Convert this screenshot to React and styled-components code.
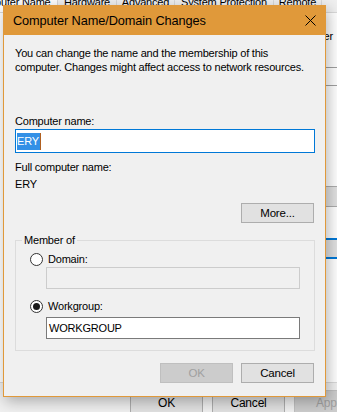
import React from "react";
import styled, { createGlobalStyle } from "styled-components";

const GlobalStyle = createGlobalStyle`
  html, body {
    margin: 0;
    padding: 0;
    background: #f0f0f0;
  }
  body {
    font-family: "Segoe UI", "Liberation Sans", Arial, sans-serif;
    font-size: 11px;
    letter-spacing: -0.2px;
    color: #000;
  }
  * {
    box-sizing: border-box;
  }
`;

const Screen = styled.div`
  position: relative;
  width: 337px;
  height: 412px;
  overflow: hidden;
  background: #f0f0f0;
`;

/* ---------- window behind the dialog ---------- */

const BackWindow = styled.div`
  width: 350px;
  display: flex;
  flex-direction: column;
`;

const TabStrip = styled.div`
  display: flex;
  height: 22px;
  margin-top: -10px;
  margin-left: -34px;
`;

const Tab = styled.div`
  width: ${(p) => p.$w}px;
  flex: none;
  padding-top: 5px;
  line-height: 14px;
  text-align: center;
  white-space: nowrap;
  background: ${(p) => (p.$active ? "#ffffff" : "#f0f0f0")};
  border-right: 1px solid #d9d9d9;
`;

const TabPage = styled.div`
  height: 371px;
  margin: 0 6px 0 -10px;
  background: #ffffff;
  border: 1px solid #d9d9d9;
  display: flex;
  flex-direction: column;
  padding-top: 16px;
`;

const PageText = styled.div`
  line-height: 14px;
  text-align: right;
  padding-right: 10px;
  white-space: nowrap;
`;

const PageField = styled.div`
  margin-top: 24px;
  height: 19px;
  border-top: 1px solid #a0a0a0;
  border-bottom: 1px solid #a0a0a0;
  margin-left: 200px;
`;

const PageButton = styled.div`
  align-self: flex-end;
  width: 110px;
  height: 21px;
  margin-top: ${(p) => p.$mt}px;
  background: #e1e1e1;
  border: ${(p) => (p.$default ? "2px solid #0078d7" : "1px solid #adadad")};
  border-right: none;
`;

const BackButtons = styled.div`
  display: flex;
  gap: 9px;
  padding: 7px 0 0 130px;
`;

const BackButton = styled.div`
  width: 73px;
  height: 23px;
  flex: none;
  background: ${(p) => (p.$disabled ? "#cccccc" : "#e1e1e1")};
  border: 1px solid ${(p) => (p.$disabled ? "#bfbfbf" : "#adadad")};
  color: ${(p) => (p.$disabled ? "#a0a0a0" : "#000")};
  display: flex;
  align-items: center;
  justify-content: center;
  font-size: 12px;
  padding-top: 2px;
`;

/* ---------- dialog ---------- */

const Dialog = styled.div`
  position: absolute;
  left: 3px;
  top: 5px;
  width: 323px;
  height: 392px;
  background: #f0f0f0;
  border: 1px solid #e0993a;
  box-shadow: 2px 4px 14px rgba(0, 0, 0, 0.3);
  display: flex;
  flex-direction: column;
`;

const TitleBar = styled.div`
  height: 29px;
  background: #e0993a;
  display: flex;
  align-items: center;
  padding-left: 9px;
`;

const Title = styled.div`
  flex: 1;
  font-size: 12.75px;
  letter-spacing: -0.1px;
  color: #000;
`;

const CloseBox = styled.div`
  width: 30px;
  height: 29px;
  display: flex;
  align-items: center;
  justify-content: center;
`;

const Body = styled.div`
  padding: 11px 10px 0 11px;
  display: flex;
  flex-direction: column;
`;

const Para = styled.p`
  margin: 0;
  line-height: 14px;
  white-space: nowrap;
`;

const Label = styled.div`
  line-height: 14px;
  margin-top: ${(p) => p.$mt || 0}px;
`;

const TextBox = styled.div`
  height: ${(p) => p.$h}px;
  margin-top: ${(p) => p.$mt || 0}px;
  margin-left: ${(p) => p.$ml || 0}px;
  background: ${(p) => (p.$disabled ? "#f0f0f0" : "#ffffff")};
  border: 1px solid
    ${(p) => (p.$focus ? "#0078d7" : p.$disabled ? "#cccccc" : "#7a7a7a")};
  display: flex;
  align-items: center;
  padding-left: ${(p) => (p.$focus ? 1 : 2)}px;
`;

const Selected = styled.span`
  background: #3390e6;
  color: #fff;
  line-height: 17px;
  padding-right: 1px;
  border-right: 1px solid #b06020;
`;

const ButtonRow = styled.div`
  display: flex;
  justify-content: flex-end;
  gap: 8px;
  margin-top: 12px;
  padding-right: 1px;
`;

const Button = styled.div`
  width: 73px;
  height: 20px;
  background: ${(p) => (p.$disabled ? "#cccccc" : "#e1e1e1")};
  border: 1px solid ${(p) => (p.$disabled ? "#bfbfbf" : "#adadad")};
  color: ${(p) => (p.$disabled ? "#a0a0a0" : "#000")};
  display: flex;
  align-items: center;
  justify-content: center;
  font-size: 11.5px;
`;

const Group = styled.fieldset`
  margin: 11px 0 0 0;
  padding: 5px 14px 11px 14px;
  border: 1px solid #dcdcdc;
  display: flex;
  flex-direction: column;
  min-width: 0;
`;

const Legend = styled.legend`
  margin-left: -8px;
  padding: 0 2px;
  line-height: 13px;
`;

const RadioRow = styled.div`
  display: flex;
  align-items: center;
  gap: 5px;
  line-height: 14px;
  margin-top: ${(p) => p.$mt || 0}px;
`;

const Radio = styled.span`
  width: 13px;
  height: 13px;
  border-radius: 50%;
  border: 1px solid #333;
  background: #fff;
  display: flex;
  align-items: center;
  justify-content: center;

  &::after {
    content: "";
    width: 7px;
    height: 7px;
    border-radius: 50%;
    background: #1a1a1a;
    display: ${(p) => (p.$checked ? "block" : "none")};
  }
`;

const tabs = [
  ["Computer Name", 92, true],
  ["Hardware", 59],
  ["Advanced", 58],
  ["System Protection", 99],
  ["Remote", 48],
];

export default function App() {
  return (
    <Screen>
      <GlobalStyle />
      <BackWindow>
        <TabStrip>
          {tabs.map(([t, w, a]) => (
            <Tab key={t} $w={w} $active={a}>
              {t}
            </Tab>
          ))}
        </TabStrip>
        <TabPage>
          <PageText>information to identify your computer</PageText>
          <PageField />
          <PageButton $mt={100} />
          <PageButton $mt={31} $default />
        </TabPage>
        <BackButtons>
          <BackButton>OK</BackButton>
          <BackButton>Cancel</BackButton>
          <BackButton $disabled>Apply</BackButton>
        </BackButtons>
      </BackWindow>

      <Dialog>
        <TitleBar>
          <Title>Computer Name/Domain Changes</Title>
          <CloseBox>
            <svg width="11" height="11" viewBox="0 0 11 11">
              <path d="M0.5 0.5 L10.5 10.5 M10.5 0.5 L0.5 10.5" stroke="#000" strokeWidth="1" />
            </svg>
          </CloseBox>
        </TitleBar>
        <Body>
          <Para>
            You can change the name and the membership of this
            <br />
            computer. Changes might affect access to network resources.
          </Para>
          <Label $mt={40}>Computer name:</Label>
          <TextBox $h={24} $mt={1} $focus>
            <Selected>ERY</Selected>
          </TextBox>
          <Label $mt={7}>Full computer name:</Label>
          <Label $mt={3}>ERY</Label>
          <ButtonRow>
            <Button>More...</Button>
          </ButtonRow>
          <Group>
            <Legend>Member of</Legend>
            <RadioRow>
              <Radio />
              Domain:
            </RadioRow>
            <TextBox $h={22} $mt={1} $ml={16} $disabled />
            <RadioRow $mt={10}>
              <Radio $checked />
              Workgroup:
            </RadioRow>
            <TextBox $h={22} $mt={4} $ml={16}>
              WORKGROUP
            </TextBox>
          </Group>
          <ButtonRow>
            <Button $disabled>OK</Button>
            <Button>Cancel</Button>
          </ButtonRow>
        </Body>
      </Dialog>
    </Screen>
  );
}
